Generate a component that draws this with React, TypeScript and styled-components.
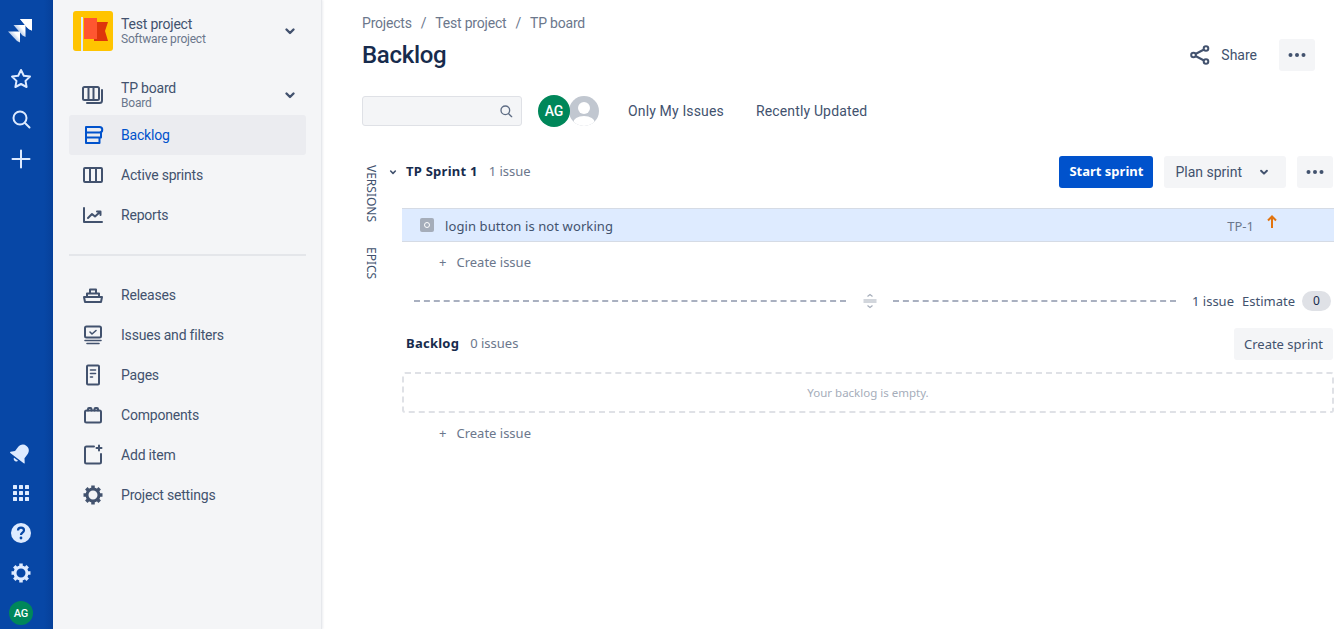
import React from 'react';
import styled, { createGlobalStyle } from 'styled-components';

const GlobalStyle = createGlobalStyle`
  html, body, #root {
    margin: 0;
    height: 100%;
    overflow: hidden;
    background: #fff;
  }
  body {
    font-family: Roboto, "Noto Sans", sans-serif;
    font-size: 14px;
    color: #42526e;
  }
`;

const Page = styled.div`
  display: flex;
  height: 629px;
`;

const GlobalNav = styled.nav`
  flex: 0 0 53px;
  padding: 11px 11px 4px 0;
  box-sizing: border-box;
  display: flex;
  flex-direction: column;
  align-items: center;
  background: linear-gradient(to right, #0747a6 44px, #06409a 53px);
  color: #deebff;
`;

const NavGroup = styled.div`
  display: flex;
  flex-direction: column;
  align-items: center;
`;

const NavSpacer = styled.div`
  flex: 1;
`;

const NavIcon = styled.div<{ $gap?: number }>`
  width: 40px;
  height: 40px;
  display: flex;
  align-items: center;
  justify-content: center;
  margin-top: ${({ $gap }) => $gap ?? 0}px;
`;

const NavAvatar = styled.div`
  width: 24px;
  height: 24px;
  margin-top: 8px;
  border-radius: 50%;
  background: #00875a;
  color: #fff;
  font-size: 11px;
  font-weight: 500;
  display: flex;
  align-items: center;
  justify-content: center;
`;

const Sidebar = styled.aside`
  flex: 0 0 269px;
  box-sizing: border-box;
  padding: 11px 15px 0 16px;
  background: #f4f5f7;
  border-right: 1px solid #e6e8ec;
  box-shadow: 1px 0 2px rgba(9, 30, 66, 0.08);
  letter-spacing: -0.2px;
`;

const ProjectHeader = styled.div`
  display: flex;
  align-items: center;
  height: 40px;
  padding-left: 4px;
  margin-bottom: 24px;
`;

const ProjectLogo = styled.div`
  width: 40px;
  height: 40px;
  flex: none;
  border-radius: 3px;
  background: #ffc400;
  margin-right: 8px;
  overflow: hidden;
`;

const ItemText = styled.div`
  flex: 1;
  min-width: 0;
  padding-top: 1px;
`;

const ItemTitle = styled.div`
  font-size: 14px;
  line-height: 15px;
`;

const ItemSub = styled.div`
  margin-top: 1px;
  font-size: 12px;
  line-height: 13px;
  color: #6b778c;
`;

const SideItem = styled.div<{ $active?: boolean }>`
  display: flex;
  align-items: center;
  height: 40px;
  border-radius: 3px;
  color: ${({ $active }) => ($active ? '#0052cc' : '#42526e')};
  background: ${({ $active }) => ($active ? '#ebecf0' : 'transparent')};
`;

const SideIcon = styled.div`
  flex: none;
  width: 52px;
  padding-left: 12px;
  box-sizing: border-box;
  display: flex;
  color: inherit;
`;

const SideSeparator = styled.div`
  height: 2px;
  margin: 19px 0;
  background: #e4e6ea;
`;

const Chevron = styled.div`
  flex: none;
  display: flex;
  margin-right: 4px;
  color: #42526e;
`;

const Main = styled.main`
  flex: 1;
  min-width: 0;
  padding-left: 40px;
  display: flex;
  flex-direction: column;
`;

const Breadcrumbs = styled.div`
  display: flex;
  gap: 9px;
  height: 20px;
  padding-top: 13px;
  line-height: 20px;
  letter-spacing: -0.2px;
  color: #6b778c;
`;

const TitleRow = styled.div`
  display: flex;
  align-items: center;
  justify-content: space-between;
  height: 32px;
  margin-top: 6px;
  padding-right: 19px;
`;

const Title = styled.h1`
  margin: 0;
  font-size: 24px;
  font-weight: 500;
  line-height: 32px;
  letter-spacing: -0.3px;
  color: #172b4d;
`;

const TitleActions = styled.div`
  display: flex;
  align-items: center;
`;

const ShareButton = styled.div`
  display: flex;
  align-items: center;
  gap: 9px;
  margin-right: 22px;
`;

const SquareButton = styled.div`
  width: 36px;
  height: 32px;
  border-radius: 3px;
  background: #f4f5f7;
  display: flex;
  align-items: center;
  justify-content: center;
  color: #42526e;
`;

const FilterRow = styled.div`
  display: flex;
  align-items: center;
  height: 32px;
  margin-top: 24px;
`;

const SearchBox = styled.div`
  width: 160px;
  height: 30px;
  box-sizing: border-box;
  border: 1px solid #dfe1e6;
  border-radius: 3px;
  background: #f4f5f7;
  display: flex;
  align-items: center;
  justify-content: flex-end;
  padding-right: 7px;
  margin-right: 16px;
  color: #5e6c84;
`;

const Avatars = styled.div`
  display: flex;
  margin-right: 28px;
`;

const UserAvatar = styled.div`
  width: 32px;
  height: 32px;
  border-radius: 50%;
  background: #00875a;
  color: #fff;
  font-size: 14px;
  font-weight: 500;
  display: flex;
  align-items: center;
  justify-content: center;
  position: relative;
  z-index: 1;
`;

const EmptyAvatar = styled.div`
  width: 32px;
  height: 32px;
  margin-left: -2px;
  display: flex;
`;

const QuickFilter = styled.div`
  margin-right: 32px;
  letter-spacing: 0.15px;
`;

const BoardArea = styled.div`
  display: flex;
  margin-top: 29px;
  font-family: "Noto Sans", Roboto, sans-serif;
  font-size: 13px;
`;

const SideTabs = styled.div`
  flex: 0 0 40px;
  display: flex;
  flex-direction: column;
  gap: 25px;
  padding-top: 9px;
`;

const SideTab = styled.div`
  align-self: flex-start;
  writing-mode: vertical-rl;
  font-size: 12px;
  line-height: 14px;
  margin-left: 2px;
  color: #42526e;
`;

const Pool = styled.div`
  flex: 1;
  min-width: 0;
`;

const SectionHeader = styled.div`
  display: flex;
  align-items: center;
  height: 32px;
`;

const SprintChevron = styled.div`
  width: 16px;
  display: flex;
  margin: 0 1px 0 -17px;
  color: #42526e;
`;

const SectionName = styled.span`
  margin-left: 4px;
  padding-bottom: 2px;
  font-weight: 700;
  letter-spacing: 0.25px;
  color: #172b4d;
`;

const SectionCount = styled.span`
  margin-left: 11px;
  padding-bottom: 2px;
  color: #6b778c;
`;

const SectionActions = styled.div`
  margin-left: auto;
  display: flex;
  gap: 11px;
  padding-right: 1px;
`;

const PrimaryButton = styled.div`
  width: 94px;
  height: 32px;
  border-radius: 3px;
  background: #0052cc;
  color: #fff;
  font-weight: 700;
  line-height: 31px;
  text-align: center;
`;

const GrayButton = styled.div`
  height: 32px;
  padding: 0 10px;
  border-radius: 3px;
  background: #f4f5f7;
  color: #42526e;
  display: flex;
  align-items: center;
`;

const PlanButton = styled(GrayButton)`
  padding: 0 12px;
  gap: 12px;
  font-family: Roboto, sans-serif;
  font-size: 14px;
  text-indent: -1px;
`;

const IssueRow = styled.div`
  display: flex;
  align-items: center;
  height: 34px;
  box-sizing: border-box;
  margin-top: 20px;
  padding-left: 18px;
  background: #deebff;
  border-top: 1px solid #d5dbe5;
  border-bottom: 1px solid #d5dbe5;
`;

const IssueType = styled.div`
  width: 14px;
  height: 14px;
  border-radius: 2px;
  background: #a5adba;
  display: flex;
  align-items: center;
  justify-content: center;
  margin-right: 11px;
`;

const IssueDot = styled.div`
  width: 4px;
  height: 4px;
  border: 1.5px solid #fff;
  border-radius: 50%;
`;

const IssueSummary = styled.div`
  flex: 1;
  padding-top: 1px;
  letter-spacing: 0.1px;
  color: #42526e;
`;

const IssueKey = styled.div`
  color: #6b778c;
  margin-right: 12px;
  padding-top: 1px;
`;

const Priority = styled.div`
  width: 12px;
  display: flex;
  margin-right: 56px;
  margin-top: -6px;
`;

const CreateIssue = styled.div`
  display: flex;
  align-items: center;
  height: 40px;
  padding-left: 37px;
  gap: 10px;
  color: #6b778c;
`;

const Divider = styled.div`
  display: flex;
  align-items: center;
  height: 20px;
  margin-top: 9px;
  padding-left: 12px;
`;

const DashLine = styled.div<{ $w: number }>`
  width: ${({ $w }) => $w}px;
  height: 0;
  border-top: 2px dashed #a9b0c0;
`;

const DividerGrip = styled.div`
  width: 47px;
  display: flex;
  justify-content: center;
  color: #a5adba;
`;

const DividerStats = styled.div`
  display: flex;
  align-items: center;
  margin-left: 16px;
  white-space: nowrap;
  color: #42526e;
`;

const EstimateLabel = styled.span`
  margin-left: 8px;
`;

const EstimateBadge = styled.span`
  width: 29px;
  height: 20px;
  margin-left: 7px;
  border-radius: 10px;
  background: #dfe1e6;
  color: #172b4d;
  font-size: 12px;
  text-align: center;
  line-height: 20px;
`;

const BacklogHeader = styled(SectionHeader)`
  margin-top: 17px;
`;

const EmptyBacklog = styled.div`
  height: 41px;
  box-sizing: border-box;
  margin-top: 12px;
  border: 2px dashed #dfe1e6;
  border-radius: 3px;
  color: #a5adba;
  font-size: 11.5px;
  display: flex;
  align-items: center;
  justify-content: center;
`;

type IconProps = { size?: number };

const Svg: React.FC<React.PropsWithChildren<IconProps>> = ({ size = 24, children }) => (
  <svg width={size} height={size} viewBox="0 0 24 24" fill="none" stroke="currentColor" strokeWidth={2} strokeLinejoin="round" strokeLinecap="round">
    {children}
  </svg>
);

const JiraLogo = () => (
  <svg width="26" height="26" viewBox="0 0 26 26">
    <defs>
      <linearGradient id="jl" x1="1" y1="0" x2="0" y2="0.8">
        <stop offset="0.3" stopColor="#fff" />
        <stop offset="1" stopColor="#deebff" stopOpacity="0.45" />
      </linearGradient>
    </defs>
    <path d="M12 1h12v11.500l-3.500-1.500z" fill="url(#jl)" />
    <path d="M12 1h12v11.500c-2-.5-4-2-5.500-3.500z" fill="#fff" />
    <path d="M5.500 7h12v12l-3-1.500z" fill="url(#jl)" />
    <path d="M0 13.500h12v11l-3-1.500z" fill="url(#jl)" />
  </svg>
);

const Star = () => (
  <svg width="24" height="24" viewBox="0 0 24 24" fill="none" stroke="currentColor" strokeWidth="2" strokeLinejoin="round">
    <path d="M12 3l2.800 5.800 6.200.8-4.500 4.300 1.100 6.100-5.600-3-5.600 3 1.100-6.100L3 9.600l6.200-.8z" />
  </svg>
);

const Search = ({ size = 24 }: IconProps) => (
  <Svg size={size}>
    <circle cx="11" cy="11" r="6.500" />
    <path d="M16 16l4.500 4.500" />
  </Svg>
);

const Plus = () => (
  <Svg>
    <path d="M12 3.500v17M3.500 12h17" />
  </Svg>
);

const Bell = () => (
  <svg width="24" height="24" viewBox="0 0 24 24" fill="currentColor">
    <g transform="rotate(38 12 12)">
      <path d="M12 3c-4 0-6 3-6 7v4l-3 3.500c-.3.400 0 1 .5 1h17c.5 0 .8-.6.5-1L18 14v-4c0-4-2-7-6-7z" />
      <path d="M9.500 20h5c0 1.300-1 2-2.500 2s-2.500-.7-2.500-2z" />
    </g>
  </svg>
);

const AppGrid = () => (
  <svg width="24" height="24" viewBox="0 0 24 24" fill="currentColor">
    {[0, 6, 12].flatMap((y) =>
      [0, 6, 12].map((x) => <rect key={`${x}-${y}`} x={4 + x} y={4 + y} width="4" height="4" rx="0.5" />),
    )}
  </svg>
);

const Help = () => (
  <svg width="24" height="24" viewBox="0 0 24 24">
    <circle cx="12" cy="12" r="10" fill="currentColor" />
    <path d="M9 9.500c0-1.700 1.300-2.800 3-2.800s3 1.100 3 2.600c0 2.400-3 2.400-3 4.700" fill="none" stroke="#0747a6" strokeWidth="2.200" />
    <circle cx="12" cy="17" r="1.400" fill="#0747a6" />
  </svg>
);

const Gear = () => (
  <svg width="24" height="24" viewBox="0 0 24 24" fill="none" stroke="currentColor">
    <circle cx="12" cy="12" r="6" strokeWidth="3" />
    <path d="M12 2.500v3M12 18.500v3M2.500 12h3M18.500 12h3M5.300 5.300l2.100 2.100M16.600 16.600l2.100 2.100M5.300 18.700l2.100-2.100M16.600 7.400l2.100-2.100" strokeWidth="3.500" />
  </svg>
);

const ChevronDown = ({ size = 24 }: IconProps) => (
  <svg width={size} height={size} viewBox="0 0 24 24" fill="none" stroke="currentColor" strokeWidth="2.400" strokeLinecap="round" strokeLinejoin="round">
    <path d="M8.500 10.500L12 14l3.500-3.500" />
  </svg>
);

const FlagArt = () => (
  <svg width="40" height="40" viewBox="0 0 40 40">
    <rect x="8" y="6" width="2" height="34" fill="#deebff" />
    <path d="M21 11h14l-3 9 3 10H21z" fill="#de350b" />
    <path d="M11 7h13v21H11z" fill="#ff5630" />
  </svg>
);

const BoardIcon = () => (
  <Svg>
    <rect x="2" y="4" width="16" height="13" rx="1.500" />
    <path d="M7.500 4v13M12.500 4v13M21 7v10.500c0 1.500-1 2.500-2.500 2.500H6" />
  </Svg>
);

const BacklogIcon = () => (
  <Svg>
    <path d="M5 4h13.500a1.500 1.500 0 0 1 0 5.500H5zM5 4v16M5 9.500h15v5H5M5 14.500h13.500V20H5" />
  </Svg>
);

const SprintsIcon = () => (
  <Svg>
    <rect x="3" y="5" width="18" height="14" rx="1" />
    <path d="M9 5v14M15 5v14" />
  </Svg>
);

const ReportsIcon = () => (
  <Svg>
    <path d="M3 5v14h18" />
    <path d="M7 15l4-4 3 2.500 5-4.500M16 8.500h3.500V12" />
  </Svg>
);

const ReleasesIcon = () => (
  <Svg>
    <path d="M3 14h18l-1 5H4zM6 14v-3.500h12V14M9 10.500V6.500h6v4" />
  </Svg>
);

const IssuesIcon = () => (
  <Svg>
    <rect x="4" y="3.500" width="16" height="11" rx="1.500" />
    <path d="M9 9l2 2 4-3.500" strokeWidth="1.600" />
    <path d="M4 17.500h16M6 20.500h12" strokeWidth="1.600" />
  </Svg>
);

const PagesIcon = () => (
  <Svg>
    <rect x="6" y="2.500" width="12" height="19" rx="1" />
    <path d="M9.500 7h5M9.500 10.500h5M9.500 14h2" strokeWidth="1.600" />
  </Svg>
);

const ComponentsIcon = () => (
  <Svg>
    <rect x="4" y="7.500" width="16" height="12" rx="1.500" />
    <path d="M7 7.500V6a1 1 0 0 1 1-1h1.500a1 1 0 0 1 1 1v1.500M13.500 7.500V6a1 1 0 0 1 1-1H16a1 1 0 0 1 1 1v1.500" />
  </Svg>
);

const AddItemIcon = () => (
  <Svg>
    <path d="M13 3.500H5.500a1.500 1.500 0 0 0-1.500 1.500v14a1.500 1.500 0 0 0 1.500 1.500h13a1.500 1.500 0 0 0 1.500-1.500V11" />
    <path d="M18 2.500v5M15.500 5h5" />
  </Svg>
);

const ShareIcon = () => (
  <svg width="24" height="24" viewBox="0 0 24 24" fill="none" stroke="currentColor" strokeWidth="2">
    <circle cx="5.500" cy="12" r="2.300" />
    <circle cx="18" cy="5.500" r="2.300" />
    <circle cx="18" cy="18.500" r="2.300" />
    <path d="M7.500 11l8.500-4.500M7.500 13l8.500 4.500" />
  </svg>
);

const Dots = () => (
  <svg width="24" height="24" viewBox="0 0 24 24" fill="currentColor">
    <circle cx="5.500" cy="12" r="2" />
    <circle cx="12" cy="12" r="2" />
    <circle cx="18.500" cy="12" r="2" />
  </svg>
);

const BlankAvatar = () => (
  <svg width="32" height="32" viewBox="0 0 32 32">
    <defs>
      <clipPath id="ba"><circle cx="16" cy="16" r="15" /></clipPath>
    </defs>
    <circle cx="16" cy="16" r="16" fill="#fff" />
    <g clipPath="url(#ba)">
      <rect width="32" height="32" fill="#c1c7d0" />
      <circle cx="16" cy="13" r="6" fill="#fff" />
      <ellipse cx="16" cy="28" rx="11" ry="7" fill="#fff" />
    </g>
  </svg>
);

const UpArrow = () => (
  <svg width="12" height="14" viewBox="0 0 12 14" fill="none" stroke="#e2740f" strokeWidth="2">
    <path d="M6 13V2M2 5.500L6 1.500l4 4" />
  </svg>
);

const GripIcon = () => (
  <svg width="16" height="16" viewBox="0 0 16 16" fill="none" stroke="currentColor" strokeWidth="1.200">
    <path d="M5.500 3.500L8 1.500l2.500 2M1.500 7h13M1.500 9h13M5.500 12.500l2.500 2 2.500-2" />
  </svg>
);

const topItems = [
  { label: 'Backlog', icon: <BacklogIcon />, active: true },
  { label: 'Active sprints', icon: <SprintsIcon /> },
  { label: 'Reports', icon: <ReportsIcon /> },
];

const bottomItems = [
  { label: 'Releases', icon: <ReleasesIcon /> },
  { label: 'Issues and filters', icon: <IssuesIcon /> },
  { label: 'Pages', icon: <PagesIcon /> },
  { label: 'Components', icon: <ComponentsIcon /> },
  { label: 'Add item', icon: <AddItemIcon /> },
  { label: 'Project settings', icon: <Gear /> },
];

const App: React.FC = () => (
  <Page>
    <GlobalStyle />
    <GlobalNav>
      <NavGroup>
        <NavIcon><JiraLogo /></NavIcon>
        <NavIcon $gap={8}><Star /></NavIcon>
        <NavIcon><Search /></NavIcon>
        <NavIcon><Plus /></NavIcon>
      </NavGroup>
      <NavSpacer />
      <NavGroup>
        <NavIcon><Bell /></NavIcon>
        <NavIcon><AppGrid /></NavIcon>
        <NavIcon><Help /></NavIcon>
        <NavIcon><Gear /></NavIcon>
        <NavAvatar>AG</NavAvatar>
      </NavGroup>
    </GlobalNav>

    <Sidebar>
      <ProjectHeader>
        <ProjectLogo><FlagArt /></ProjectLogo>
        <ItemText>
          <ItemTitle>Test project</ItemTitle>
          <ItemSub>Software project</ItemSub>
        </ItemText>
        <Chevron><ChevronDown /></Chevron>
      </ProjectHeader>
      <SideItem>
        <SideIcon><BoardIcon /></SideIcon>
        <ItemText>
          <ItemTitle>TP board</ItemTitle>
          <ItemSub>Board</ItemSub>
        </ItemText>
        <Chevron><ChevronDown /></Chevron>
      </SideItem>
      {topItems.map((item) => (
        <SideItem key={item.label} $active={item.active}>
          <SideIcon>{item.icon}</SideIcon>
          {item.label}
        </SideItem>
      ))}
      <SideSeparator />
      {bottomItems.map((item) => (
        <SideItem key={item.label}>
          <SideIcon>{item.icon}</SideIcon>
          {item.label}
        </SideItem>
      ))}
    </Sidebar>

    <Main>
      <Breadcrumbs>
        <span>Projects</span>
        <span>/</span>
        <span>Test project</span>
        <span>/</span>
        <span>TP board</span>
      </Breadcrumbs>
      <TitleRow>
        <Title>Backlog</Title>
        <TitleActions>
          <ShareButton><ShareIcon />Share</ShareButton>
          <SquareButton><Dots /></SquareButton>
        </TitleActions>
      </TitleRow>
      <FilterRow>
        <SearchBox><Search size={16} /></SearchBox>
        <Avatars>
          <UserAvatar>AG</UserAvatar>
          <EmptyAvatar><BlankAvatar /></EmptyAvatar>
        </Avatars>
        <QuickFilter>Only My Issues</QuickFilter>
        <QuickFilter>Recently Updated</QuickFilter>
      </FilterRow>

      <BoardArea>
        <SideTabs>
          <SideTab>VERSIONS</SideTab>
          <SideTab>EPICS</SideTab>
        </SideTabs>
        <Pool>
          <SectionHeader>
            <SprintChevron><ChevronDown size={16} /></SprintChevron>
            <SectionName>TP Sprint 1</SectionName>
            <SectionCount>1 issue</SectionCount>
            <SectionActions>
              <PrimaryButton>Start sprint</PrimaryButton>
              <PlanButton>Plan sprint <ChevronDown size={20} /></PlanButton>
              <SquareButton><Dots /></SquareButton>
            </SectionActions>
          </SectionHeader>
          <IssueRow>
            <IssueType><IssueDot /></IssueType>
            <IssueSummary>login button is not working</IssueSummary>
            <IssueKey>TP-1</IssueKey>
            <Priority><UpArrow /></Priority>
          </IssueRow>
          <CreateIssue><span>+</span>Create issue</CreateIssue>
          <Divider>
            <DashLine $w={432} />
            <DividerGrip><GripIcon /></DividerGrip>
            <DashLine $w={283} />
            <DividerStats>
              1 issue
              <EstimateLabel>Estimate</EstimateLabel>
              <EstimateBadge>0</EstimateBadge>
            </DividerStats>
          </Divider>
          <BacklogHeader>
            <SectionName>Backlog</SectionName>
            <SectionCount>0 issues</SectionCount>
            <SectionActions>
              <GrayButton>Create sprint</GrayButton>
            </SectionActions>
          </BacklogHeader>
          <EmptyBacklog>Your backlog is empty.</EmptyBacklog>
          <CreateIssue><span>+</span>Create issue</CreateIssue>
        </Pool>
      </BoardArea>
    </Main>
  </Page>
);

export default App;
